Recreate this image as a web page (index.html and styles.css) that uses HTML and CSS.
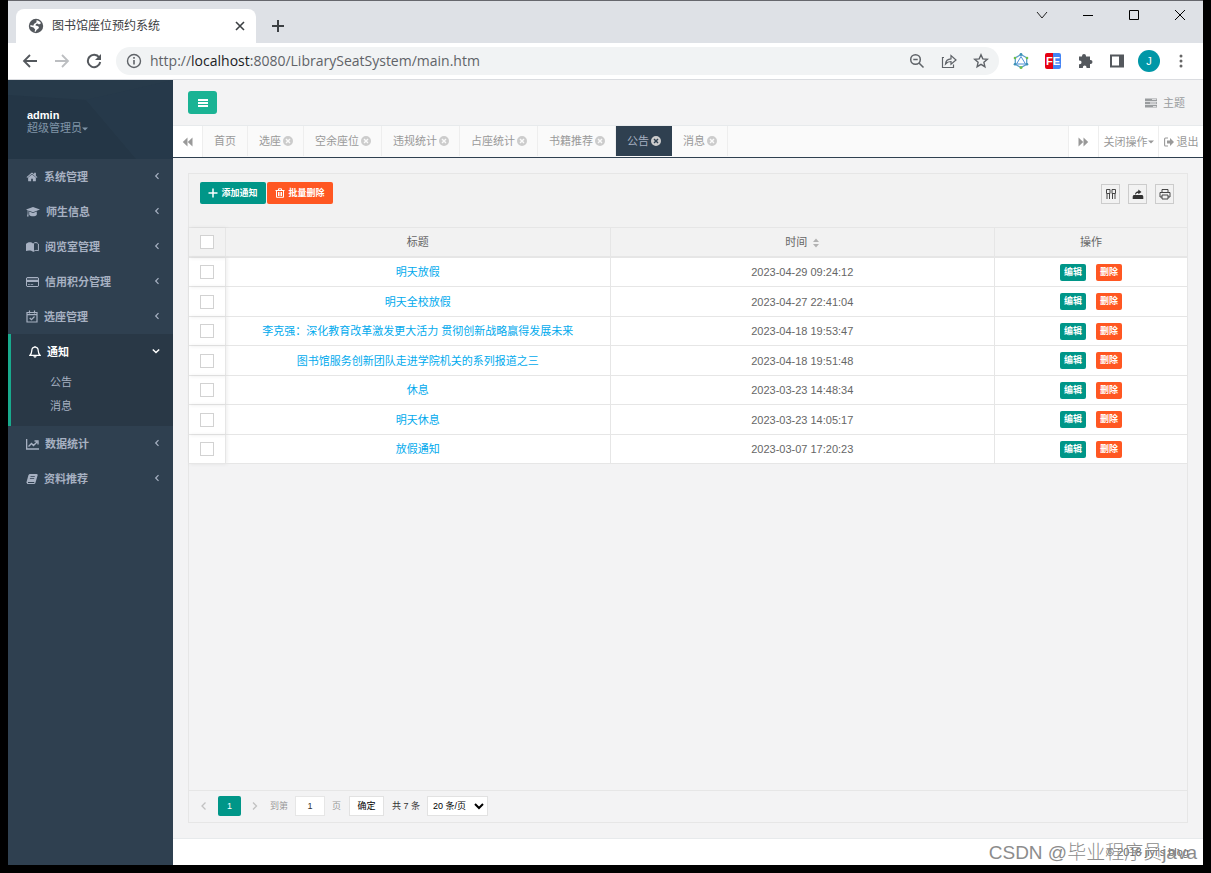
FILE: index.html
```html
<!DOCTYPE html>
<html lang="zh-CN">
<head>
<meta charset="utf-8">
<title>图书馆座位预约系统</title>
<link rel="stylesheet" href="styles.css">
</head>
<body>
<svg class="defs" aria-hidden="true">
  <symbol id="home" viewBox="0 0 1792 1792"><path d="M1472 992v480q0 26-19 45t-45 19h-384v-384h-256v384h-384q-26 0-45-19t-19-45v-480q0-1 .5-3t.5-3l575-474 575 474q1 2 1 6zm223-69l-62 74q-8 9-21 11h-3q-13 0-21-7l-692-577-692 577q-12 8-24 7-13-2-21-11l-62-74q-8-10-7-23.5t11-21.5l719-599q32-26 76-26t76 26l244 204v-195q0-14 9-23t23-9h192q14 0 23 9t9 23v408l219 182q10 8 11 21.5t-7 23.5z"/></symbol>
  <symbol id="cap" viewBox="0 0 14 12"><path d="M7 1 0 3.600l1.600.6v3.200L1 10.600h1.600L2.400 7.400V4.500L7 6.300l7-2.700zM3.200 5.600v3.200C4.500 10.800 9.500 10.800 10.800 8.800V5.600L7 7.100z"/></symbol>
  <symbol id="reader" viewBox="0 0 13 12"><path d="M0 10V3C1.500.8 5.500.6 7 2.500v8.300C5.500 9.200 2 9.200 0 10z"/><path d="M7.500 2.500C9 1 11 1.300 12.400 3v6.700c-1.800-.6-3.500-.4-4.900.8z" fill="none" stroke="currentColor"/></symbol>
  <symbol id="card" viewBox="0 0 13 12"><path fill-rule="evenodd" d="M1.300 1h10.400L13 2.200v7.600L11.700 11H1.300L0 9.800V2.200zM1 2.300v1.500h11V2.300zM1 6v3.900h11V6zm1 2.200h1.800v.9H2zm2.600 0h2.600v.9H4.600z"/></symbol>
  <symbol id="calendar" viewBox="0 0 12 13"><path d="M1 2.500h10V12H1zM1 4.700h10M3.500.5v3M8.500.5v3M3.700 8l1.800 1.700L8.500 6.500" fill="none" stroke="currentColor" stroke-width="1.200"/></symbol>
  <symbol id="bell" viewBox="0 0 12 13"><path d="M6 1v1M1 10.300h10C9.300 8.500 9.300 7 9.200 5.500 9 1 3 1 2.800 5.500 2.700 7 2.700 8.500 1 10.300zM4.800 11.300c.4 1 2 1 2.400 0" fill="none" stroke="currentColor" stroke-width="1.300"/></symbol>
  <symbol id="chart" viewBox="0 0 13 12"><path d="M.6 1v10H13M2.500 8.500l3-3 2 2L11 4M8.500 3H12v3.500" fill="none" stroke="currentColor" stroke-width="1.400"/></symbol>
  <symbol id="book" viewBox="0 0 12 12"><path fill-rule="evenodd" d="M3.600 1h7.200l1 .8-2.500 8.400-1 .8H1.400L.4 9.500 2.500 2zM2 9v.9h6l.5-.9zM4.600 3l-.2.8h4.300l.2-.8zM4 5l-.2.8h4.300l.2-.8z"/></symbol>
  <symbol id="left" viewBox="0 0 8 10"><path d="M5.500 1.500 2 5l3.500 3.500" fill="none" stroke="currentColor" stroke-width="1.300"/></symbol>
  <symbol id="right" viewBox="0 0 8 10"><path d="M2 1.500 5.500 5 2 8.500" fill="none" stroke="currentColor" stroke-width="1.300"/></symbol>
  <symbol id="fold" viewBox="0 0 6 8"><path d="M4.500 1.200 1.700 4l2.800 2.800" fill="none" stroke="currentColor" stroke-width="1.200"/></symbol>
  <symbol id="down" viewBox="0 0 8 8"><path d="M.8 2.500 4 5.500l3.200-3" fill="none" stroke="currentColor" stroke-width="1.500"/></symbol>
  <symbol id="caret" viewBox="0 0 6 4"><path d="M0 .5h6L3 3.500z"/></symbol>
  <symbol id="bars" viewBox="0 0 10 10"><path d="M0 1h10v2H0zM0 4h10v2H0zM0 7h10v2H0z"/></symbol>
  <symbol id="tasks" viewBox="0 0 12 10"><path fill-rule="evenodd" d="M0 .5h12v2.500H0zM7 1.300v.8h4.300v-.8zM0 3.800h12v2.500H0zM5 4.600v.8h6.300v-.8zM0 7.100h12v2.500H0zM8 7.900v.8h3.300v-.8z"/></symbol>
  <symbol id="back" viewBox="0 0 10 10"><path d="M5 .5v9L.3 5zM10 .5v9L5.300 5z"/></symbol>
  <symbol id="forward" viewBox="0 0 10 10"><path d="M0 .5v9L4.700 5zM5 .5v9L9.700 5z"/></symbol>
  <symbol id="times" viewBox="0 0 10 10"><path fill-rule="evenodd" d="M5 0a5 5 0 1 0 0 10A5 5 0 0 0 5 0zM3.500 2.500 5 4l1.500-1.500 1 1L6 5l1.500 1.500-1 1L5 6 3.500 7.500l-1-1L4 5 2.500 3.500z"/></symbol>
  <symbol id="signout" viewBox="0 0 10 10"><path d="M4 1H1.500Q.6 1 .6 2v6q0 1 .9 1H4" fill="none" stroke="currentColor" stroke-width="1.100"/><path d="M3 3.500h3V1l4 4-4 4V6.500H3z"/></symbol>
  <symbol id="plus" viewBox="0 0 10 10"><path d="M5 .5v9M.5 5h9" fill="none" stroke="currentColor" stroke-width="1.500"/></symbol>
  <symbol id="trash" viewBox="0 0 10 10"><path d="M.5 2.500h9M3.500 2V.8h3V2M1.500 3v6.300h7V3M3.500 4v4M5 4v4M6.500 4v4" fill="none" stroke="currentColor" stroke-width="1"/></symbol>
  <symbol id="columns" viewBox="0 0 12 12"><path d="M1.500 1.500h3.500v4H1.500zM7 1.500h3.500v4H7zM2 6v5M4.500 6v5M7.500 6v5M10 6v5" fill="none" stroke="currentColor" stroke-width=".9"/></symbol>
  <symbol id="export" viewBox="0 0 12 12"><path d="M1.500 7h9l.8 1.500V11H.7V8.500zM3 6.500C3 4.500 4.500 3.300 6.300 3.200V1.500L9.500 4 6.300 6.300V5C5 5 4 5.500 3.800 6.500z"/></symbol>
  <symbol id="print" viewBox="0 0 12 12"><path d="M3 4V1.500h6V4M3 9H1V4.500h10V9H9M3 7h6v4H3z" fill="none" stroke="currentColor" stroke-width=".9"/></symbol>
</svg>
<div class="window">
  <header class="strip">
    <div class="page-tab">
      <svg width="16" height="16" viewBox="0 0 16 16"><circle cx="8" cy="8" r="7.200" fill="#54585d"/><path fill="#fff" d="M8.500 2.200c2 .2 3.500 1.200 4.500 3L11 6.500 9.500 5.500 8 6l-.5 1.500 2 .5 1.500 1-.5 1.500L8.500 12l-.7 1.800L6.500 13.500l.7-2L5.500 9.500l-3.300-1 .3-1.500 2.800.8L6 6l2.500-1.800z"/></svg>
      <span>图书馆座位预约系统</span>
      <button class="plain" aria-label="关闭标签"><svg width="10" height="10" viewBox="0 0 10 10"><path d="m1 1 8 8M9 1 1 9" stroke="#3c4043" stroke-width="1.600"/></svg></button>
    </div>
    <button class="plain new-tab" aria-label="新标签"><svg width="12" height="12" viewBox="0 0 12 12"><path d="M6 0v12M0 6h12" stroke="#3c4043" stroke-width="2"/></svg></button>
    <div class="window-buttons">
      <button class="plain" aria-label="搜索标签"><svg width="12" height="12" viewBox="0 0 12 12"><path d="m1 3 5 6 5-6" fill="none" stroke="#222"/></svg></button>
      <button class="plain" aria-label="最小化"><svg width="12" height="12" viewBox="0 0 12 12"><path d="M1 6.500h10" stroke="#000"/></svg></button>
      <button class="plain" aria-label="最大化"><svg width="12" height="12" viewBox="0 0 12 12"><path d="M1.500 1.500h9v9h-9z" fill="none" stroke="#000"/></svg></button>
      <button class="plain" aria-label="关闭"><svg width="12" height="12" viewBox="0 0 12 12"><path d="m1 1 10 10M11 1 1 11" stroke="#000"/></svg></button>
    </div>
  </header>
  <div class="address-row">
    <button class="plain" aria-label="后退"><svg width="16" height="16" viewBox="0 0 16 16"><path d="M15 8H2M8 2 2 8l6 6" fill="none" stroke="#54585d" stroke-width="1.800"/></svg></button>
    <button class="plain" aria-label="前进"><svg width="16" height="16" viewBox="0 0 16 16"><path d="M1 8h13M8 2l6 6-6 6" fill="none" stroke="#bcbec1" stroke-width="1.800"/></svg></button>
    <button class="plain" aria-label="刷新"><svg width="16" height="16" viewBox="0 0 16 16"><path d="M13.200 4.500A6.200 6.200 0 1 0 14.200 9" fill="none" stroke="#54585d" stroke-width="2"/><path d="M15 1v6H9z" fill="#54585d"/></svg></button>
    <div class="omnibox">
      <svg width="16" height="16" viewBox="0 0 16 16"><circle cx="8" cy="8" r="6.500" fill="none" stroke="#5f6368" stroke-width="1.400"/><path d="M8 7v4.500M8 4v1.800" stroke="#5f6368" stroke-width="1.600"/></svg>
      <span class="url">http://<b>localhost</b>:8080/LibrarySeatSystem/main.htm</span>
      <button class="plain" aria-label="缩放"><svg width="16" height="16" viewBox="0 0 16 16"><circle cx="6.500" cy="6.500" r="4.800" fill="none" stroke="#5f6368" stroke-width="1.500"/><path d="m10 10 4.500 4.500M4.300 6.500h4.400" stroke="#5f6368" stroke-width="1.500"/></svg></button>
      <button class="plain" aria-label="分享"><svg width="16" height="16" viewBox="0 0 16 16"><path d="M3 4.500H1.500v10h11v-3M4.500 11c.3-3.500 2.500-5 5.500-5.200V2.500l5 4.500-5 4.200V8.500c-2.500 0-4 .7-5.500 2.500z" fill="none" stroke="#5f6368" stroke-width="1.200"/></svg></button>
      <button class="plain" aria-label="收藏"><svg width="16" height="16" viewBox="0 0 16 16"><path d="m8 1.800 1.800 4.100 4.500.4-3.400 3 1 4.400L8 11.400l-3.900 2.300 1-4.400-3.400-3 4.500-.4z" fill="none" stroke="#5f6368" stroke-width="1.400"/></svg></button>
    </div>
    <div class="extensions">
      <svg width="16" height="16" viewBox="0 0 16 16"><path d="m8 1.500 5.700 3.300v6.500L8 14.600l-5.700-3.300V4.800z" fill="none" stroke="#5a9fca" stroke-width="1.300"/><path d="m8 3.500 4.500 7.500h-9z" fill="none" stroke="#4f91d6"/><g fill="#6fbf4c"><circle cx="8" cy="14.500" r="1.500"/><circle cx="2" cy="5" r="1.300"/><circle cx="14" cy="5" r="1.300"/></g><g fill="#3c91b5"><circle cx="8" cy="1.500" r="1.400"/><circle cx="2" cy="11.300" r="1.300"/><circle cx="14" cy="11.300" r="1.300"/></g></svg>
      <span class="fe">FE</span>
      <svg width="16" height="16" viewBox="0 0 16 16"><path fill="#54585d" d="M5 3a2 2 0 0 1 4 0v.5h4V7h.5a2 2 0 0 1 0 4H13v4H9.500v-.8a1.800 1.800 0 0 0-3.600 0v.8H2v-3.800h.7a1.800 1.800 0 0 0 0-3.700H2v-4h3z"/></svg>
      <svg width="16" height="16" viewBox="0 0 16 16"><path fill="#54585d" fill-rule="evenodd" d="M1 1.500h14v13H1zM3 3.500v9h7v-9z"/></svg>
      <span class="avatar">J</span>
      <svg width="4" height="16" viewBox="0 0 4 16" fill="#54585d"><circle cx="2" cy="3" r="1.500"/><circle cx="2" cy="8" r="1.500"/><circle cx="2" cy="13" r="1.500"/></svg>
    </div>
  </div>
  <div class="app">
    <aside class="sidebar">
      <div class="profile">
        <svg class="profile-art" viewBox="0 0 165 79" preserveAspectRatio="none"><path d="M0 0h165v79h-37L78 20 0 15z" fill="#273a4a"/><path d="M78 20 165 0v79h-37z" fill="#26394a"/></svg>
        <strong>admin</strong>
        <button class="plain role">超级管理员<svg width="6" height="4"><use href="#caret"/></svg></button>
      </div>
      <nav class="menu">
        <a href="#"><svg width="12" height="12"><use href="#home"/></svg>系统管理<svg class="arrow" width="6" height="8"><use href="#fold"/></svg></a>
        <a href="#"><svg width="14" height="12"><use href="#cap"/></svg>师生信息<svg class="arrow" width="6" height="8"><use href="#fold"/></svg></a>
        <a href="#"><svg width="13" height="12"><use href="#reader"/></svg>阅览室管理<svg class="arrow" width="6" height="8"><use href="#fold"/></svg></a>
        <a href="#"><svg width="13" height="12"><use href="#card"/></svg>信用积分管理<svg class="arrow" width="6" height="8"><use href="#fold"/></svg></a>
        <a href="#"><svg width="12" height="13"><use href="#calendar"/></svg>选座管理<svg class="arrow" width="6" height="8"><use href="#fold"/></svg></a>
        <div class="open">
          <a href="#"><svg width="12" height="13"><use href="#bell"/></svg>通知<svg class="arrow" width="8" height="8"><use href="#down"/></svg></a>
          <a class="sub" href="#">公告</a>
          <a class="sub" href="#">消息</a>
        </div>
        <a href="#"><svg width="13" height="12"><use href="#chart"/></svg>数据统计<svg class="arrow" width="6" height="8"><use href="#fold"/></svg></a>
        <a href="#"><svg width="12" height="12"><use href="#book"/></svg>资料推荐<svg class="arrow" width="6" height="8"><use href="#fold"/></svg></a>
      </nav>
    </aside>
    <main class="main">
      <div class="navbar">
        <button class="toggle" aria-label="菜单"><svg width="10" height="10"><use href="#bars"/></svg></button>
        <a class="theme" href="#"><svg width="12" height="10"><use href="#tasks"/></svg>主题</a>
      </div>
      <div class="tabs">
        <button class="edge" aria-label="向左"><svg width="11" height="10"><use href="#back"/></svg></button>
        <div class="tab-list">
          <a href="#">首页</a>
          <a class="closable" href="#">选座<svg width="10" height="10"><use href="#times"/></svg></a>
          <a class="closable" href="#">空余座位<svg width="10" height="10"><use href="#times"/></svg></a>
          <a class="closable" href="#">违规统计<svg width="10" height="10"><use href="#times"/></svg></a>
          <a class="closable" href="#">占座统计<svg width="10" height="10"><use href="#times"/></svg></a>
          <a class="closable" href="#">书籍推荐<svg width="10" height="10"><use href="#times"/></svg></a>
          <a class="closable current" href="#">公告<svg width="10" height="10"><use href="#times"/></svg></a>
          <a class="closable" href="#">消息<svg width="10" height="10"><use href="#times"/></svg></a>
        </div>
        <button class="edge right" aria-label="向右"><svg width="11" height="10"><use href="#forward"/></svg></button>
        <button class="edge right wide">关闭操作<svg width="6" height="4"><use href="#caret"/></svg></button>
        <button class="edge right exit"><svg width="10" height="10"><use href="#signout"/></svg>退出</button>
      </div>
      <div class="content">
        <section class="panel">
          <div class="toolbar">
            <button class="btn green"><svg width="10" height="10"><use href="#plus"/></svg>添加通知</button>
            <button class="btn orange"><svg width="10" height="10"><use href="#trash"/></svg>批量删除</button>
            <div class="tools">
              <button aria-label="筛选列"><svg width="12" height="12"><use href="#columns"/></svg></button>
              <button aria-label="导出"><svg width="12" height="12"><use href="#export"/></svg></button>
              <button aria-label="打印"><svg width="12" height="12"><use href="#print"/></svg></button>
            </div>
          </div>
          <div class="table-area">
            <table>
              <colgroup><col class="col-check"><col><col><col class="col-ops"></colgroup>
              <thead><tr><th><input type="checkbox" aria-label="全选"></th><th>标题</th><th>时间<svg class="sort" width="6" height="10" viewBox="0 0 6 10"><path d="M0 4h6L3 .5zM0 6h6L3 9.500z"/></svg></th><th>操作</th></tr></thead>
              <tbody>
                <tr><td><input type="checkbox" aria-label="选择"></td><td><a href="#">明天放假</a></td><td>2023-04-29 09:24:12</td><td class="ops"><button class="green">编辑</button><button class="orange">删除</button></td></tr>
                <tr><td><input type="checkbox" aria-label="选择"></td><td><a href="#">明天全校放假</a></td><td>2023-04-27 22:41:04</td><td class="ops"><button class="green">编辑</button><button class="orange">删除</button></td></tr>
                <tr><td><input type="checkbox" aria-label="选择"></td><td><a href="#">李克强：深化教育改革激发更大活力 贯彻创新战略赢得发展未来</a></td><td>2023-04-18 19:53:47</td><td class="ops"><button class="green">编辑</button><button class="orange">删除</button></td></tr>
                <tr><td><input type="checkbox" aria-label="选择"></td><td><a href="#">图书馆服务创新团队走进学院机关的系列报道之三</a></td><td>2023-04-18 19:51:48</td><td class="ops"><button class="green">编辑</button><button class="orange">删除</button></td></tr>
                <tr><td><input type="checkbox" aria-label="选择"></td><td><a href="#">休息</a></td><td>2023-03-23 14:48:34</td><td class="ops"><button class="green">编辑</button><button class="orange">删除</button></td></tr>
                <tr><td><input type="checkbox" aria-label="选择"></td><td><a href="#">明天休息</a></td><td>2023-03-23 14:05:17</td><td class="ops"><button class="green">编辑</button><button class="orange">删除</button></td></tr>
                <tr><td><input type="checkbox" aria-label="选择"></td><td><a href="#">放假通知</a></td><td>2023-03-07 17:20:23</td><td class="ops"><button class="green">编辑</button><button class="orange">删除</button></td></tr>
              </tbody>
            </table>
          </div>
          <div class="pager">
            <button class="plain step" aria-label="上一页"><svg width="8" height="10"><use href="#left"/></svg></button>
            <span class="page">1</span>
            <button class="plain step" aria-label="下一页"><svg width="8" height="10"><use href="#right"/></svg></button>
            <label class="jump">到第<input type="text" value="1">页</label>
            <button class="confirm">确定</button>
            <span class="total">共 7 条</span>
            <select aria-label="每页条数"><option>20 条/页</option></select>
          </div>
        </section>
      </div>
      <footer class="footer">© 2018 jiyi's blog<span class="watermark">CSDN @毕业程序员java</span></footer>
    </main>
  </div>
</div>
</body>
</html>
```
FILE: styles.css
```css
* { box-sizing: border-box; }
body { margin: 0; padding: 0 8px 8px; background: #000; font-family: "Liberation Sans", "Noto Sans CJK SC", sans-serif; font-size: 11px; line-height: 16px; color: #666; }
button, input, select { font: inherit; margin: 0; }
button { cursor: pointer; padding: 0; border: 0; }
a { text-decoration: none; color: inherit; }
svg { fill: currentColor; flex: none; }
.defs { position: absolute; width: 0; height: 0; }
.plain { background: none; display: flex; align-items: center; justify-content: center; color: inherit; }
.window { display: flex; flex-direction: column; height: calc(100vh - 8px); min-height: 600px; background: #fff; border-top: 1px solid #66676d; }

.strip { display: flex; height: 42px; background: #dee1e6; padding: 8px 0 0 8px; }
.page-tab { display: flex; align-items: center; gap: 8px; width: 240px; padding: 0 11px 0 12px; background: #fff; border-radius: 8px 8px 0 0; font-size: 12px; color: #3c4043; }
.page-tab .plain { margin-left: auto; }
.new-tab { width: 44px; }
.window-buttons { display: flex; align-items: flex-start; margin-left: auto; }
.window-buttons .plain { width: 46px; height: 12px; }

.address-row { display: flex; align-items: center; height: 37px; padding: 0 20px 0 14px; gap: 16px; border-bottom: 1px solid #dadce0; }
.omnibox { display: flex; flex: 1; align-items: center; gap: 16px; height: 28px; padding: 0 10px; border-radius: 14px; background: #f1f3f4; margin-left: -2px; }
.url { flex: 1; margin-left: -8px; font: 14px/20px "Open Sans", sans-serif; color: #5f6368; }
.url b { font-weight: 400; color: #202124; }
.extensions { display: flex; align-items: center; gap: 16px; margin-left: -2px; }
.extensions svg:last-child { margin-left: 3px; }
.fe { width: 16px; border-radius: 2px; background: linear-gradient(90deg, #e60012 50%, #4285f4 50%); color: #fff; font-size: 11px; font-weight: 700; text-align: center; }
.avatar { width: 22px; border-radius: 50%; background: #0097a7; color: #fff; line-height: 22px; text-align: center; margin: 0 0 0 -3px; }

.app { display: flex; flex: 1; min-height: 0; background: #f3f3f4; }
.sidebar { flex: none; width: 165px; background: #2f4050; color: #a7b1c2; }
.profile { position: relative; height: 79px; padding: 28px 19px 0; background: #243646; }
.profile-art { position: absolute; inset: 0; width: 100%; height: 100%; }
.profile strong { position: relative; display: block; color: #fff; line-height: 14px; }
.role { position: relative; color: #8095a8; line-height: 13px; }
.menu a { display: flex; align-items: center; height: 35px; padding: 0 13px 0 18px; gap: 6px; font-weight: 600; }
.menu .arrow { margin: 0 0 2px auto; }
.open { border-left: 3px solid #19aa8d; background: #293846; padding-bottom: 8px; }
.open a { color: #fff; }
.menu .sub { height: 25px; padding-left: 39px; font-weight: 400; color: #a7b1c2; }
.open .sub:last-child { height: 24px; }

.main { display: flex; flex: 1; flex-direction: column; min-width: 0; }
.navbar { display: flex; align-items: center; justify-content: space-between; height: 46px; padding: 0 18px 0 15px; border-bottom: 1px solid #e7eaec; }
.toggle { display: flex; align-items: center; justify-content: center; width: 29px; height: 23px; border-radius: 3px; background: #1ab394; color: #fff; }
.theme { display: flex; align-items: center; gap: 6px; color: #999c9e; }
.tabs { display: flex; height: 32px; background: #fafafa; border-bottom: 1px solid #2f4050; color: #999; }
.tab-list { display: flex; flex: 1; align-items: flex-start; }
.tab-list a { display: flex; align-items: center; gap: 2px; height: 30px; padding: 0 11px; border-right: 1px solid #eee; }
.tab-list .closable { padding-right: 10px; }
.tab-list svg { color: #ccc; }
.tab-list .current { background: #2f4050; color: #a7b1c2; border-color: #2f4050; }
.edge { display: flex; align-items: center; justify-content: center; width: 30px; background: #fff; border-right: 1px solid #eee; color: #999; }
.edge.right { border-right: 0; border-left: 1px solid #eee; }
.edge.wide { width: 60px; }
.edge.exit { width: 45px; gap: 3px; }

.content { display: flex; flex: 1; min-height: 0; padding: 15px; }
.panel { display: flex; flex: 1; flex-direction: column; min-width: 0; border: 1px solid #e6e6e6; }
.toolbar { display: flex; align-items: flex-start; gap: 1px; height: 53px; padding: 8px 13px 0 11px; background: #f2f2f2; }
.green { background: #009688; color: #fff; }
.orange { background: #ff5722; color: #fff; }
.btn { display: flex; align-items: center; justify-content: center; gap: 3px; width: 66px; height: 22px; border-radius: 2px; font-size: 9px; font-weight: 600; }
.tools { display: flex; gap: 8px; margin: 2px 0 0 auto; }
.tools button { display: flex; align-items: center; justify-content: center; width: 19px; height: 20px; border: 1px solid #ccc; background: none; color: #333; }
.table-area { flex: 1; min-height: 0; border-top: 1px solid #e6e6e6; }
table { width: 100%; table-layout: fixed; border-spacing: 0; background: #fff; }
.col-check { width: 37px; }
.col-ops { width: 192px; }
th, td { padding: 0; text-align: center; vertical-align: middle; border: solid #e6e6e6; border-width: 0 1px 1px 0; line-height: 16px; font-weight: 400; }
th:last-child, td:last-child { border-right: 0; }
th { height: 30px; background: #f2f2f2; border-bottom-width: 2px; }
th:first-child, td:first-child { box-shadow: 1px 0 4px rgba(0, 0, 0, .08); }
td { height: 30px; }
tr:nth-child(odd) td { height: 29px; }
td a { color: #01aaed; }
input[type=checkbox] { appearance: none; display: block; width: 14px; height: 14px; margin: 0 auto; border: 1px solid #d2d2d2; background: #fff; }
.sort { margin-left: 6px; vertical-align: middle; color: #b2b2b2; }
.ops button { width: 26px; height: 17px; margin: 0 5px; border-radius: 2px; font-size: 9px; line-height: 17px; font-weight: 600; vertical-align: middle; }
.pager { display: flex; align-items: center; height: 32px; padding: 0 11px 2px; border-top: 1px solid #e6e6e6; font-size: 9px; color: #333; }
.step { color: #c2c2c2; width: 8px; }
.page { width: 23px; margin: 0 10px; border-radius: 2px; background: #009688; color: #fff; line-height: 20px; text-align: center; }
.jump { display: flex; align-items: center; gap: 7px; margin-left: 11px; color: #999; }
.jump input { width: 30px; height: 20px; padding: 0; border: 1px solid #e6e6e6; text-align: center; color: #333; }
.confirm { width: 35px; height: 20px; margin: 0 8px; border: 1px solid #e2e2e2; background: #fff; color: #000; }
.pager select { height: 20px; width: 61px; margin-left: 7px; padding: 0 1px; border: 1px solid #e2e2e2; background: #fff; color: #000; }

.footer { position: relative; flex: none; height: 27px; padding: 0 14px; border-top: 1px solid #e7eaec; background: #fff; line-height: 27px; text-align: right; }
.watermark { position: absolute; right: 6px; top: 0; color: #8c8c8c; font-size: 19px; font-weight: 300; line-height: 28px; white-space: nowrap; }
```
